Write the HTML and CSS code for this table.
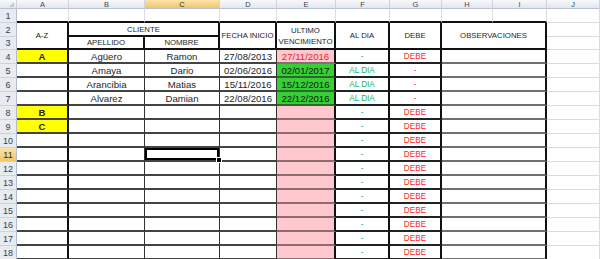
FILE: index.html
```html
<!DOCTYPE html>
<html lang="es">
<head>
<meta charset="utf-8">
<title>Hoja de clientes</title>
<link rel="stylesheet" href="styles.css">
</head>
<body>
<div class="sheet">
  <div class="ch corner"></div>
  <div class="ch">A</div><div class="ch">B</div><div class="ch sel">C</div><div class="ch">D</div><div class="ch">E</div><div class="ch">F</div><div class="ch">G</div><div class="ch">H</div><div class="ch">I</div><div class="ch">J</div>

  <div class="rh">1</div>
  <div class="g top"></div><div class="g top"></div><div class="g top"></div><div class="g top"></div><div class="g top"></div><div class="g top"></div><div class="g top"></div><div class="g top"></div><div class="g top"></div><div class="g"></div>

  <div class="rh">2</div>
  <div class="h span-r">A-Z</div>
  <div class="h span-c">CLIENTE</div>
  <div class="h span-r">FECHA INICIO</div>
  <div class="h span-r two">ULTIMO<br>VENCIMIENTO</div>
  <div class="h span-r">AL DIA</div>
  <div class="h span-r">DEBE</div>
  <div class="h span-r span-c">OBSERVACIONES</div>
  <div class="g"></div>

  <div class="rh">3</div>
  <div class="h">APELLIDO</div><div class="h">NOMBRE</div>
  <div class="g"></div>

  <div class="rh">4</div>
  <div class="d k yel">A</div><div class="d">Agüero</div><div class="d">Ramon</div><div class="d">27/08/2013</div><div class="d k pink">27/11/2016</div><div class="d k f ok">-</div><div class="d k f bad">DEBE</div><div class="d k obs span-c"></div><div class="g"></div>

  <div class="rh">5</div>
  <div class="d k"></div><div class="d">Amaya</div><div class="d">Dario</div><div class="d">02/06/2016</div><div class="d k grn">02/01/2017</div><div class="d k f ok">AL DIA</div><div class="d k f bad">-</div><div class="d k obs span-c"></div><div class="g"></div>

  <div class="rh">6</div>
  <div class="d k"></div><div class="d">Arancibia</div><div class="d">Matias</div><div class="d">15/11/2016</div><div class="d k grn">15/12/2016</div><div class="d k f ok">AL DIA</div><div class="d k f bad">-</div><div class="d k obs span-c"></div><div class="g"></div>

  <div class="rh">7</div>
  <div class="d k"></div><div class="d">Alvarez</div><div class="d">Damian</div><div class="d">22/08/2016</div><div class="d k grn">22/12/2016</div><div class="d k f ok">AL DIA</div><div class="d k f bad">-</div><div class="d k obs span-c"></div><div class="g"></div>

  <div class="rh">8</div>
  <div class="d k yel">B</div><div class="d"></div><div class="d"></div><div class="d"></div><div class="d k pink"></div><div class="d k f ok">-</div><div class="d k f bad">DEBE</div><div class="d k obs span-c"></div><div class="g"></div>

  <div class="rh">9</div>
  <div class="d k yel">C</div><div class="d"></div><div class="d"></div><div class="d"></div><div class="d k pink"></div><div class="d k f ok">-</div><div class="d k f bad">DEBE</div><div class="d k obs span-c"></div><div class="g"></div>

  <div class="rh">10</div>
  <div class="d k"></div><div class="d"></div><div class="d"></div><div class="d"></div><div class="d k pink"></div><div class="d k f ok">-</div><div class="d k f bad">DEBE</div><div class="d k obs span-c"></div><div class="g"></div>

  <div class="rh sel">11</div>
  <div class="d k"></div><div class="d"></div><div class="d cur"></div><div class="d"></div><div class="d k pink"></div><div class="d k f ok">-</div><div class="d k f bad">DEBE</div><div class="d k obs span-c"></div><div class="g"></div>

  <div class="rh">12</div>
  <div class="d k"></div><div class="d"></div><div class="d"></div><div class="d"></div><div class="d k pink"></div><div class="d k f ok">-</div><div class="d k f bad">DEBE</div><div class="d k obs span-c"></div><div class="g"></div>

  <div class="rh">13</div>
  <div class="d k"></div><div class="d"></div><div class="d"></div><div class="d"></div><div class="d k pink"></div><div class="d k f ok">-</div><div class="d k f bad">DEBE</div><div class="d k obs span-c"></div><div class="g"></div>

  <div class="rh">14</div>
  <div class="d k"></div><div class="d"></div><div class="d"></div><div class="d"></div><div class="d k pink"></div><div class="d k f ok">-</div><div class="d k f bad">DEBE</div><div class="d k obs span-c"></div><div class="g"></div>

  <div class="rh">15</div>
  <div class="d k"></div><div class="d"></div><div class="d"></div><div class="d"></div><div class="d k pink"></div><div class="d k f ok">-</div><div class="d k f bad">DEBE</div><div class="d k obs span-c"></div><div class="g"></div>

  <div class="rh">16</div>
  <div class="d k"></div><div class="d"></div><div class="d"></div><div class="d"></div><div class="d k pink"></div><div class="d k f ok">-</div><div class="d k f bad">DEBE</div><div class="d k obs span-c"></div><div class="g"></div>

  <div class="rh">17</div>
  <div class="d k"></div><div class="d"></div><div class="d"></div><div class="d"></div><div class="d k pink"></div><div class="d k f ok">-</div><div class="d k f bad">DEBE</div><div class="d k obs span-c"></div><div class="g"></div>

  <div class="rh">18</div>
  <div class="d k"></div><div class="d"></div><div class="d"></div><div class="d"></div><div class="d k pink"></div><div class="d k f ok">-</div><div class="d k f bad">DEBE</div><div class="d k obs span-c"></div><div class="g"></div>
</div>
</body>
</html>
```

FILE: styles.css
```css
html, body {
  margin: 0;
  padding: 0;
  background: #ffffff;
  overflow: hidden;
}

body {
  font-family: "Liberation Sans", Arial, sans-serif;
}

.sheet {
  display: grid;
  grid-template-columns: 17px 52px 76px 75px 57px 59px 54px 52px 51px 54px 53px;
  grid-template-rows: 9px 14px 14px 13px repeat(15, 14px);
  width: 600px;
}

.sheet > div {
  box-sizing: border-box;
  display: flex;
  align-items: center;
  justify-content: center;
  overflow: hidden;
  white-space: nowrap;
}

.span-r { grid-row: span 2; }
.span-c { grid-column: span 2; }

/* column headers */
.ch {
  background: linear-gradient(#f7f9fb, #e3e7ed);
  border-right: 1px solid #cfd5dd;
  border-bottom: 1px solid #b9c3cf;
  font-size: 7.5px;
  line-height: 9px;
  color: #3d4653;
}

.ch.sel,
.rh.sel {
  background: linear-gradient(#fbe4aa, #f2c567);
  color: #2e2a20;
}

.sheet > .corner {
  position: relative;
  overflow: visible;
}

.corner::after {
  content: "";
  position: absolute;
  right: 2px;
  bottom: 1px;
  border-left: 5px solid transparent;
  border-bottom: 5px solid #c2c8d0;
}

/* row headers */
.rh {
  background: #e8ecf1;
  border-right: 1px solid #b3bdc9;
  border-bottom: 1px solid #cdd3db;
  font-size: 9px;
  color: #344050;
}

/* plain grid cells */
.g {
  border-right: 1px solid #dcdcdc;
  border-bottom: 1px solid #dcdcdc;
}

.g.top {
  border-bottom: 2px solid #111;
}

/* table header cells */
.h {
  border-right: 2px solid #111;
  border-bottom: 2px solid #111;
  font-size: 7.8px;
  color: #262626;
  text-align: center;
}

.h.two {
  line-height: 11px;
}

/* data cells */
.d {
  border-right: 1px solid #333;
  border-bottom: 2px solid #444;
  font-size: 9.6px;
  color: #262626;
  padding-top: 1px;
}

.d.k {
  border-right: 2px solid #111;
}

.d.f {
  border-bottom-color: #222;
  font-size: 8.2px;
}

.d.obs {
  border-bottom-color: #707070;
}

.yel {
  background: #ffff00;
  font-weight: bold;
}

.pink {
  background: #ffc7ce;
  color: #ea2630;
  border-bottom-color: #8e6b6f;
}

.grn {
  background: #36d036;
  color: #141414;
  border-bottom-color: #2a6a2a;
}

.ok { color: #19b452; }
.bad { color: #ff2424; }

/* active cell */
.sheet > .cur {
  position: relative;
  overflow: visible;
  box-shadow: inset 0 0 0 2px #000;
}

.cur::after {
  content: "";
  position: absolute;
  right: -3px;
  bottom: -3px;
  width: 4px;
  height: 4px;
  background: #000;
  border: 1px solid #fff;
  z-index: 2;
}
```
